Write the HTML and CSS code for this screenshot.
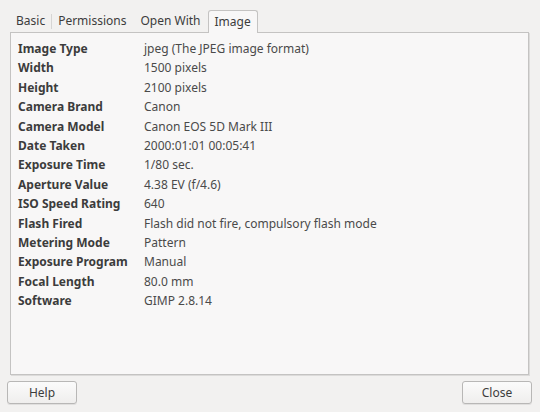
FILE: index.html
```html
<!DOCTYPE html>
<html lang="en">
<head>
	<meta charset="UTF-8">
	<title>Image Properties</title>
	<link rel="stylesheet" href="styles.css">
</head>
<body>
	<div id="wrapper">
		<div class="notebook">
			<ul class="tabs">
				<li class="tab"><span>Basic</span></li>
				<li class="sep"></li>
				<li class="tab"><span>Permissions</span></li>
				<li class="tab open-with"><span>Open With</span></li>
				<li class="tab current"><span>Image</span></li>
			</ul>
			<div class="page">
				<table class="props">
					<tr><th>Image Type</th><td>jpeg (The JPEG image format)</td></tr>
					<tr><th>Width</th><td>1500 pixels</td></tr>
					<tr><th>Height</th><td>2100 pixels</td></tr>
					<tr><th>Camera Brand</th><td>Canon</td></tr>
					<tr><th>Camera Model</th><td>Canon EOS 5D Mark III</td></tr>
					<tr><th>Date Taken</th><td>2000:01:01 00:05:41</td></tr>
					<tr><th>Exposure Time</th><td>1/80 sec.</td></tr>
					<tr><th>Aperture Value</th><td>4.38 EV (f/4.6)</td></tr>
					<tr><th>ISO Speed Rating</th><td>640</td></tr>
					<tr><th>Flash Fired</th><td>Flash did not fire, compulsory flash mode</td></tr>
					<tr><th>Metering Mode</th><td>Pattern</td></tr>
					<tr><th>Exposure Program</th><td>Manual</td></tr>
					<tr><th>Focal Length</th><td>80.0 mm</td></tr>
					<tr><th>Software</th><td>GIMP 2.8.14</td></tr>
				</table>
			</div>
		</div>
		<div class="actions">
			<button class="btn">Help</button>
			<button class="btn">Close</button>
		</div>
	</div>
</body>
</html>
```
FILE: styles.css
```css
body,div,ul,li,table,th,td,button{
    margin: 0;
    padding: 0;
}
body{
    background: #f2f1f0;
    font-family: "Noto Sans", "DejaVu Sans", sans-serif;
    font-size: 12px;
    color: #3c3c3c;
}
ul{
    list-style: none;
}
table{
    border-collapse: collapse;
    border-spacing: 0;
}
#wrapper{
    width: 540px;
    height: 412px;
    overflow: hidden;
}
.notebook{
    margin: 10px 11px 0 10px;
}
.tabs{
    display: flex;
    align-items: flex-end;
    height: 22px;
}
.tabs .tab{
    height: 22px;
    line-height: 22px;
    padding: 0 6px;
    color: #3c3c3c;
}
.tabs .tab.open-with{
    padding: 0 7px 0 8px;
}
.tabs .sep{
    width: 1px;
    height: 15px;
    margin-bottom: 3px;
    background: #d6d5d4;
}
.tabs .tab.current{
    padding: 0 6px;
    background: #f8f7f7;
    border: 1px solid #c4c3c2;
    border-bottom: none;
    border-radius: 3px 3px 0 0;
    position: relative;
    top: 1px;
}
.page{
    height: 343px;
    background: #f8f7f7;
    border: 1px solid #c4c3c2;
    box-shadow: 1px 1px 0 #dcdbda;
    padding: 6px 7px 0;
    box-sizing: border-box;
}
.props th,.props td{
    height: 19.4px;
    line-height: 19.4px;
    text-align: left;
    white-space: nowrap;
    vertical-align: middle;
}
.props th{
    width: 126px;
    font-weight: bold;
    color: #3c3c3c;
}
.props td{
    color: #4a4a4a;
}
.actions{
    display: flex;
    justify-content: space-between;
    padding: 6px 8px 0 7px;
}
.btn{
    width: 70px;
    height: 23px;
    font-family: inherit;
    font-size: 12px;
    color: #3c3c3c;
    background: linear-gradient(#fbfbfb, #efeeed);
    border: 1px solid #b8b7b6;
    border-radius: 3px;
    box-shadow: 0 1px 0 #e0dfde;
}
```
